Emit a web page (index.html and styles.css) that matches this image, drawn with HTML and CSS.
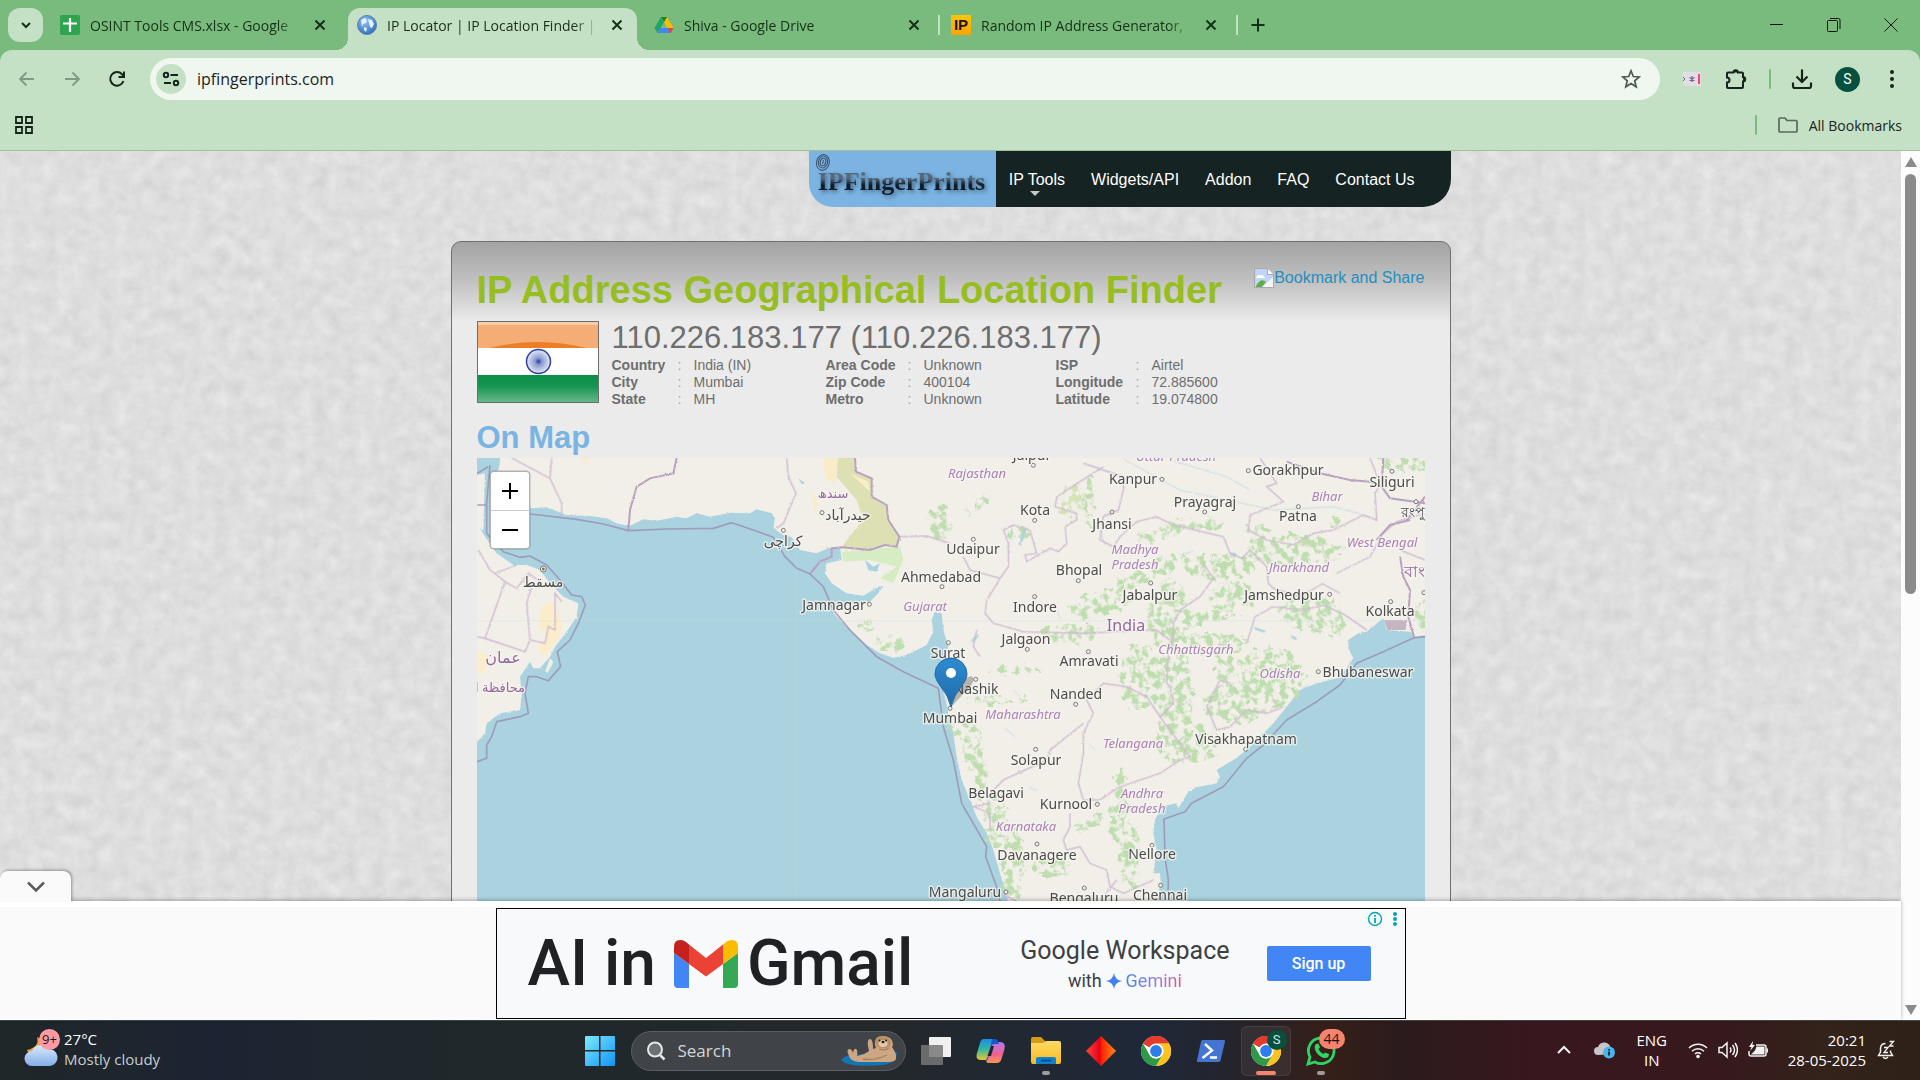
FILE: index.html
```html
<!DOCTYPE html>
<html lang="en">
<head>
<meta charset="utf-8">
<title>IP Locator | IP Location Finder | IPFingerPrints</title>
<link rel="stylesheet" href="styles.css">
</head>
<body>
<svg class="defs" width="0" height="0" aria-hidden="true">
  <defs>
    <symbol id="x" viewBox="0 0 16 16"><path d="M3.5 3.5l9 9M12.500 3.500l-9 9" stroke="#15301a" stroke-width="2" fill="none"/></symbol>
    <symbol id="chrome" viewBox="0 0 30 30">
      <circle cx="15" cy="15" r="15" fill="#fff"/>
      <path d="M15 15L2 7.500A15 15 0 0 1 28 7.500H15z" fill="#e33b2e"/>
      <path d="M15 0a15 15 0 0 1 13 7.500H15a7.500 7.500 0 0 0-6.500 3.750L2 7.500A15 15 0 0 1 15 0z" fill="#e33b2e"/>
      <path d="M28 7.500A15 15 0 0 1 15 30l6.500-11.250A7.500 7.500 0 0 0 15 7.500z" fill="#fcc31e"/>
      <path d="M2 7.500A15 15 0 0 0 15 30l6.500-11.250a7.500 7.500 0 0 1-13 0z" fill="#2e9a48"/>
      <circle cx="15" cy="15" r="7.500" fill="#fff"/><circle cx="15" cy="15" r="5.900" fill="#2f7de9"/>
    </symbol>
    <linearGradient id="win" x1="0" y1="0" x2="1" y2="1"><stop offset="0" stop-color="#7deafd"/><stop offset="1" stop-color="#1193f5"/></linearGradient>
    <linearGradient id="cop1" x1="0" y1="0" x2="0" y2="1"><stop offset="0" stop-color="#1b8ce8"/><stop offset=".5" stop-color="#35b8a0"/><stop offset="1" stop-color="#e9c62e"/></linearGradient>
    <linearGradient id="cop2" x1="0" y1="0" x2="0" y2="1"><stop offset="0" stop-color="#b678f0"/><stop offset=".6" stop-color="#f0628e"/><stop offset="1" stop-color="#fb9a4b"/></linearGradient>
    <linearGradient id="dia" x1="0" y1="0" x2="1" y2="0"><stop offset="0" stop-color="#ff4a3a"/><stop offset=".45" stop-color="#e6001c"/><stop offset=".55" stop-color="#ff2a00"/><stop offset="1" stop-color="#ff8a1c"/></linearGradient>
    <linearGradient id="fold" x1="0" y1="0" x2="0" y2="1"><stop offset="0" stop-color="#ffdb63"/><stop offset="1" stop-color="#f9b924"/></linearGradient>
    <linearGradient id="pin" x1="0" y1="0" x2="0" y2="1"><stop offset="0" stop-color="#2e8bd0"/><stop offset="1" stop-color="#1f69a8"/></linearGradient>
    <linearGradient id="cloud" x1="0" y1="0" x2="0" y2="1"><stop offset="0" stop-color="#d8eafc"/><stop offset="1" stop-color="#84aee8"/></linearGradient>
    <linearGradient id="saf" x1="0" y1="0" x2="0" y2="1"><stop offset="0" stop-color="#0a8f47"/><stop offset=".4" stop-color="#169650"/><stop offset="1" stop-color="#6ab98e"/></linearGradient>
    <radialGradient id="globe" cx=".4" cy=".3" r=".8"><stop offset="0" stop-color="#8fc6f5"/><stop offset="1" stop-color="#2464b8"/></radialGradient>
    <radialGradient id="chakra"><stop offset="0" stop-color="#2a3d9b"/><stop offset=".3" stop-color="#8c9bd0"/><stop offset="1" stop-color="#e6eaf6"/></radialGradient>
    <filter id="rough" x="-5%" y="-5%" width="110%" height="110%"><feTurbulence type="fractalNoise" baseFrequency=".12" numOctaves="3" seed="4"/><feDisplacementMap in="SourceGraphic" scale="7"/></filter>
    <filter id="patch" x="-5%" y="-5%" width="110%" height="110%"><feTurbulence type="fractalNoise" baseFrequency=".045" numOctaves="5" seed="9" result="n"/><feDisplacementMap in="SourceGraphic" in2="n" scale="45" xChannelSelector="R" yChannelSelector="G" result="d"/><feColorMatrix in="n" values="0 0 0 0 0  0 0 0 0 0  0 0 0 0 0  0 0 0 6 -2.600" result="m"/><feComposite in="d" in2="m" operator="in"/></filter>
    <filter id="paper" x="0" y="0" width="100%" height="100%" color-interpolation-filters="sRGB"><feTurbulence type="fractalNoise" baseFrequency=".07" numOctaves="5" seed="3"/><feColorMatrix values=".08 .05 0 0 .805  .08 .05 0 0 .805  .08 .05 0 0 .805  0 0 0 0 1"/></filter>
  </defs>
</svg>

<header class="browser">
  <div class="tabstrip">
    <button class="tab-search" aria-label="Search tabs"><svg width="16" height="16" viewBox="0 0 16 16"><path d="M4 6l4 4 4-4" fill="none" stroke="#12301a" stroke-width="2"/></svg></button>
    <div class="tab"><svg width="20" height="20" viewBox="0 0 20 20"><rect width="20" height="20" rx="2" fill="#2ea44f"/><path d="M10 3v14M3 8.500h14" stroke="#fff" stroke-width="2.200"/></svg><span class="tab-title">OSINT Tools CMS.xlsx - Google</span><button class="tab-close" aria-label="Close tab"><svg width="16" height="16"><use href="#x"/></svg></button></div>
    <div class="tab active"><svg width="20" height="20" viewBox="0 0 20 20"><circle cx="10" cy="10" r="9.500" fill="url(#globe)" stroke="#5a7fa8"/><path d="M4 5l4-2 2 2-1 3-3 1-1 3zM11 4l4 1 2 4-2 4-2-1-1-4zM7 12l3 1-1 4-2-2z" fill="#e8f2fb"/></svg><span class="tab-title">IP Locator | IP Location Finder |</span><button class="tab-close" aria-label="Close tab"><svg width="16" height="16"><use href="#x"/></svg></button></div>
    <div class="tab"><svg width="20" height="20" viewBox="0 0 20 20"><path d="M7 2h6l-6.500 11.500L3.500 18 .5 13z" fill="#1fa463"/><path d="M7 2h6l6.500 11h-6z" fill="#fbbc04"/><path d="M6.500 13h13l-3 5h-13z" fill="#4285f4"/><path d="M13.500 13h6l-3 5z" fill="#ea4335"/><path d="M7 2h6l-3 5z" fill="#188038"/><path d="M10 7.500L6.800 13h6.400z" fill="#79bb7c"/></svg><span class="tab-title">Shiva - Google Drive</span><button class="tab-close" aria-label="Close tab"><svg width="16" height="16"><use href="#x"/></svg></button></div>
    <div class="tab divided"><span class="ip-icon">IP</span><span class="tab-title">Random IP Address Generator,</span><button class="tab-close" aria-label="Close tab"><svg width="16" height="16"><use href="#x"/></svg></button></div>
    <button class="new-tab" aria-label="New tab"><svg width="16" height="16" viewBox="0 0 16 16"><path d="M8 1.500v13M1.500 8h13" stroke="#15301a" stroke-width="2"/></svg></button>
    <div class="window-buttons">
      <button aria-label="Minimize"><svg width="14" height="14" viewBox="0 0 14 14"><path d="M0 6.500h13" stroke="#111"/></svg></button>
      <button aria-label="Restore"><svg width="14" height="14" viewBox="0 0 14 14"><path d="M.5 3.500q0-1 1-1h8q1 0 1 1v9q0 1-1 1h-8q-1 0-1-1zM3 .5h8.500q1.500 0 1.500 1.500v9" fill="none" stroke="#111"/></svg></button>
      <button aria-label="Close"><svg width="14" height="14" viewBox="0 0 14 14"><path d="M.5.5l13 13M13.500.5l-13 13" stroke="#111"/></svg></button>
    </div>
  </div>
  <div class="chrome-body">
    <div class="toolbar">
      <button class="tool" aria-label="Back"><svg width="20" height="20" viewBox="0 0 20 20"><path d="M17 10H3M9.500 3.500L3 10l6.500 6.500" fill="none" stroke="#7f9a82" stroke-width="1.800"/></svg></button>
      <button class="tool" aria-label="Forward"><svg width="20" height="20" viewBox="0 0 20 20"><path d="M3 10h14M10.500 3.500L17 10l-6.500 6.500" fill="none" stroke="#7f9a82" stroke-width="1.800"/></svg></button>
      <button class="tool" aria-label="Reload"><svg width="20" height="20" viewBox="0 0 20 20"><path d="M16.500 12A6.800 6.800 0 1 1 15 5.200l1.700 1.800M17 2.500V8h-5.500" fill="none" stroke="#16251a" stroke-width="2"/></svg></button>
      <div class="omnibox">
        <button class="site-info" aria-label="Site information"><svg width="18" height="18" viewBox="0 0 18 18"><g fill="none" stroke="#16251a" stroke-width="2"><circle cx="4" cy="5" r="2.200"/><path d="M8.500 5H16M2 13h7"/><circle cx="14" cy="13" r="2.200"/></g></svg></button>
        <input type="text" aria-label="Address" value="ipfingerprints.com">
        <button class="star" aria-label="Bookmark this tab"><svg width="20" height="20" viewBox="0 0 20 20"><path d="M10 1.800l2.300 5.700 6 .4-4.600 3.900 1.500 6L10 14.500l-5.200 3.300 1.500-6L1.700 7.900l6-.4z" fill="none" stroke="#4c5a4e" stroke-width="1.700"/></svg></button>
      </div>
      <div class="tools-right">
        <button class="tool" aria-label="Password extension"><svg width="18" height="14" viewBox="0 0 18 14"><rect width="18" height="14" fill="#e3dde6"/><path d="M9 4v6M6.500 5.500l5 3M11.500 5.500l-5 3" stroke="#6c6a86" stroke-width="1.200" fill="none"/><path d="M0 5l2 2-2 2" stroke="#6c6a86" fill="none"/><path d="M16 2v10" stroke="#f04b6c" stroke-width="2"/></svg></button>
        <button class="tool" aria-label="Extensions"><svg width="22" height="22" viewBox="0 0 22 22"><path d="M3 4.500h5.500a2.200 2.200 0 0 1 4.400 0H17q1 0 1 1V9a2.200 2.200 0 0 1 0 4.400V19q0 1-1 1H3q-1 0-1-1v-4.500a2.500 2.500 0 0 0 0-5V5.500q0-1 1-1z" fill="none" stroke="#16251a" stroke-width="2"/><path d="M8.500 4.500a2.200 2.200 0 0 1 4.400 0zM18 9a2.200 2.200 0 0 1 0 4.400z" fill="#16251a"/></svg></button>
        <span class="divider"></span>
        <button class="tool" aria-label="Downloads"><svg width="22" height="22" viewBox="0 0 22 22"><path d="M11 1.500V14M5.500 8.500L11 14l5.500-5.500M2 14.500V18q0 2 2 2h14q2 0 2-2v-3.500" fill="none" stroke="#16251a" stroke-width="2.200"/></svg></button>
        <button class="avatar" aria-label="Profile">S</button>
        <button class="tool" aria-label="Menu"><svg width="20" height="20" viewBox="0 0 20 20"><circle cx="10" cy="3" r="2"/><circle cx="10" cy="10" r="2"/><circle cx="10" cy="17" r="2"/></svg></button>
      </div>
    </div>
    <div class="bookmarks">
      <button class="apps" aria-label="Apps"><svg width="18" height="18" viewBox="0 0 18 18"><path d="M1 1h6v6H1zM11 1h6v6h-6zM1 11h6v6H1zM11 11h6v6h-6z" fill="none" stroke="#16251a" stroke-width="1.800"/></svg></button>
      <span class="divider"></span>
      <button class="all-bookmarks"><svg width="20" height="16" viewBox="0 0 20 16"><path d="M1 2q0-1 1-1h5l2 2.500h9q1 0 1 1V14q0 1-1 1H2q-1 0-1-1z" fill="none" stroke="#59685b" stroke-width="1.700"/></svg>All Bookmarks</button>
    </div>
  </div>
</header>

<div class="viewport">
  <div class="window">
    <main class="page">
      <svg class="paper" aria-hidden="true"><rect width="100%" height="100%" filter="url(#paper)"/></svg>
      <div class="container">
        <nav class="site-nav">
          <a class="logo" href="#"><svg width="16" height="19" viewBox="0 0 16 19" aria-hidden="true"><g fill="none" stroke="#3d566c" stroke-width="1.100" transform="rotate(14 8 9)"><ellipse cx="8" cy="9.500" rx="6.300" ry="8"/><ellipse cx="8" cy="9" rx="4.500" ry="6"/><ellipse cx="8" cy="9" rx="2.700" ry="3.800"/><path d="M8 7v4"/></g></svg><span>IPFingerPrints</span></a>
          <ul>
            <li class="has-menu"><a href="#">IP Tools</a></li><li><a href="#">Widgets/API</a></li><li><a href="#">Addon</a></li><li><a href="#">FAQ</a></li><li><a href="#">Contact Us</a></li>
          </ul>
        </nav>
        <section class="card">
          <div class="card-head">
            <h1>IP Address Geographical Location Finder</h1>
            <a class="share" href="#"><svg width="20" height="20" viewBox="0 0 20 20" aria-hidden="true"><path d="M.5.500h13l6 6v13H.5z" fill="#c3d5f5" stroke="#a9a9a9"/><path d="M2 10q1-4 4-2.500 3-2 5 2.500z" fill="#fff"/><path d="M2 18q5-9 10-4l-4 5H2z" fill="#5aaf4a"/><path d="M8 19l11-10v10z" fill="#f5f5f5"/><path d="M13.500.500v6h6" fill="#fff" stroke="#a9a9a9"/></svg>Bookmark and Share</a>
          </div>
          <div class="summary">
            <svg class="flag" width="122" height="82" viewBox="0 0 122 82" role="img" aria-label="Flag of India"><path d="M0 0h122v27H0z" fill="#f4ad75"/><path d="M0 0h122v4H0z" fill="#f8cdaa"/><path d="M12 27q49-12 98 0z" fill="#ec7f26"/><path d="M0 27h122v27H0z" fill="#fff"/><path d="M0 54h122v28H0z" fill="url(#saf)"/><circle cx="61.500" cy="40.500" r="12" fill="url(#chakra)" stroke="#2c3f9d" stroke-width="1.500"/><rect x=".5" y=".5" width="121" height="81" fill="none" stroke="#6d6d6d"/></svg>
            <div class="details">
              <p class="ip">110.226.183.177 (110.226.183.177)</p>
              <table>
                <colgroup><col class="c66"><col class="c16"><col class="c132"><col class="c82"><col class="c16"><col class="c132"><col class="c80"><col class="c16"><col></colgroup>
                <tr><th scope="row">Country</th><td class="colon">:</td><td>India (IN)</td><th>Area Code</th><td class="colon">:</td><td>Unknown</td><th>ISP</th><td class="colon">:</td><td>Airtel</td></tr>
                <tr><th scope="row">City</th><td class="colon">:</td><td>Mumbai</td><th>Zip Code</th><td class="colon">:</td><td>400104</td><th>Longitude</th><td class="colon">:</td><td>72.885600</td></tr>
                <tr><th scope="row">State</th><td class="colon">:</td><td>MH</td><th>Metro</th><td class="colon">:</td><td>Unknown</td><th>Latitude</th><td class="colon">:</td><td>19.074800</td></tr>
              </table>
            </div>
          </div>
          <h2>On Map</h2>
          <div class="map">
            <svg class="tiles" viewBox="0 0 948 460" role="img" aria-label="Map of India">
              <rect width="948" height="460" fill="#aad3df"/>
              <g transform="translate(-7 -8) scale(.33333)">
                <g fill="#f2efe9" filter="url(#rough)">
                  <path d="M88 0Q95 60 75 70L130 150L185 175L230 172L290 195L360 198L410 205L440 220L478 228L520 208L560 212L620 200L650 205L680 190L720 200L780 188L840 190L860 178L905 190L915 205L910 235L940 255L965 262L990 300L1040 310L1075 295L1110 290L1115 330L1070 340L1065 370L1085 400L1130 430L1180 437L1225 410L1240 408L1225 430L1200 455L1100 470L1090 490L1130 530L1190 585L1230 610L1270 623L1310 615L1370 585L1390 545L1385 510L1395 485L1415 490L1420 540L1435 590L1425 640L1415 700L1425 740L1435 790L1450 850L1460 920L1475 990L1500 1050L1520 1100L1550 1150L1570 1200L1590 1270L1605 1320L1625 1400L2060 1400L2060 1353L2072 1300L2070 1270L2050 1270L2060 1200L2050 1150L2055 1110L2075 1070L2120 1060L2125 1075L2155 1025L2180 1012L2240 1000L2250 980L2240 960L2290 930L2330 900L2370 860L2410 820L2450 770L2490 720L2540 700L2600 685L2625 660L2650 625L2635 595L2635 570L2665 550L2690 545L2740 505L2750 540L2820 545L2835 560L2900 550L2900 0Z"/>
                  <path d="M0 215L25 225L45 260L80 310L130 345L170 345L210 360L240 400L280 440L325 460L320 500L290 545L255 590L240 620L210 655L190 655L180 635L150 680L155 730L150 780L90 790L50 820L45 850L21 875L0 880Z"/>
                  <path d="M0 80L45 70L40 240L0 230ZM225 665L240 625L250 635L235 665Z"/>
                </g>
                <g filter="url(#rough)">
                  <path d="M1105 0H1155L1158 65L1205 85L1205 140L1250 165L1255 210L1288 260L1280 290L1245 285L1200 300L1115 292L1150 245L1180 210L1160 150L1100 80Z" fill="#dde0b3"/>
                  <path d="M1060 20h42l-5 80l-30-10zM1020 110l25 50l-10 30zM1140 70l55 25l5 30z" fill="#f8ecc9"/>
                  <path d="M1115 305L1290 290L1300 330L1270 400L1230 385L1280 350L1200 330L1120 335Z" fill="#d6ecc2"/>
                  <path d="M1185 330l25 20l20-10l-10 25l-25-5zM985 85l20 15l-10 2z" fill="#aad3df"/>
                  <path d="M215 465L250 460L275 520L270 560L220 620L205 590L235 560L205 530ZM21 600l40 20l-20 50h-20zM330 24h30l-15 20z" fill="#fbeccb"/>
                </g>
                <g fill="#bfdeb0" filter="url(#patch)" transform="translate(1410 0)">
                  <ellipse cx="390" cy="150" rx="34" ry="52" fill="#d4e4b6"/><ellipse cx="445" cy="160" rx="18" ry="75"/><ellipse cx="660" cy="250" rx="70" ry="18" transform="rotate(-20 660 250)"/><ellipse cx="770" cy="222" rx="90" ry="15"/><ellipse cx="955" cy="250" rx="42" ry="22"/><ellipse cx="840" cy="350" rx="105" ry="40"/><ellipse cx="880" cy="440" rx="70" ry="48"/><ellipse cx="480" cy="465" rx="95" ry="34" transform="rotate(-12 480 465)"/><ellipse cx="620" cy="370" rx="130" ry="24" transform="rotate(-25 620 370)"/><ellipse cx="690" cy="500" rx="65" ry="110"/><ellipse cx="700" cy="740" rx="60" ry="150"/><ellipse cx="740" cy="880" rx="100" ry="65"/><ellipse cx="600" cy="680" rx="60" ry="100"/><ellipse cx="850" cy="640" rx="26" ry="85"/><ellipse cx="990" cy="680" rx="100" ry="90"/><ellipse cx="890" cy="760" rx="100" ry="60"/><ellipse cx="1110" cy="490" rx="95" ry="56"/><ellipse cx="1180" cy="525" rx="34" ry="40"/><ellipse cx="1060" cy="300" rx="150" ry="46"/><ellipse cx="390" cy="550" rx="90" ry="28"/><ellipse cx="60" cy="840" rx="34" ry="30"/><ellipse cx="95" cy="890" rx="22" ry="80"/><ellipse cx="120" cy="980" rx="17" ry="80"/><ellipse cx="165" cy="1110" rx="35" ry="75"/><ellipse cx="220" cy="1250" rx="36" ry="110"/><ellipse cx="540" cy="1080" rx="30" ry="120"/><ellipse cx="570" cy="1220" rx="30" ry="100"/><ellipse cx="460" cy="1110" rx="60" ry="16" transform="rotate(-35 460 1110)"/><ellipse cx="820" cy="575" rx="110" ry="28"/><ellipse cx="1400" cy="38" rx="90" ry="26"/><ellipse cx="1445" cy="500" rx="24" ry="50"/><ellipse cx="235" cy="250" rx="34" ry="18"/><ellipse cx="110" cy="170" rx="60" ry="10" transform="rotate(-50 110 170)"/><ellipse cx="-145" cy="585" rx="45" ry="24"/><ellipse cx="-225" cy="525" rx="26" ry="14"/><ellipse cx="0" cy="220" rx="30" ry="60"/><ellipse cx="1190" cy="215" rx="34" ry="18"/><ellipse cx="170" cy="750" rx="90" ry="12"/><ellipse cx="230" cy="660" rx="80" ry="10"/><ellipse cx="800" cy="500" rx="60" ry="20"/><ellipse cx="330" cy="1250" rx="60" ry="30"/>
                </g>
                <g fill="none" stroke="#a9d2e2" filter="url(#rough)" transform="translate(1410 0)">
                  <path d="M350 480l10 25M555 30L720 120L840 145L1000 180L1180 170L1290 200M480 240l15 45M720 315l40-12M195 835l30 25M220 720l20 20M270 1015l20 5M445 880l20 20M1085 715l20-10M1050 555l20 10M935 530l30 15M690 30L860 80L930 120" stroke-width="3" stroke-opacity=".6"/>
                  <path d="M255 235l-15 50M95 575l20-20M870 310l20 5M945 535l30 10M1055 560l15 8" stroke-width="7"/>
                </g>
                <g fill="none" stroke="#cdb9d0" stroke-width="4" filter="url(#rough)">
                  <path d="M125 24L240 85L245 24M240 85L275 160V205M950 24L955 80L978 130L940 220L915 238M1288 260L1370 258L1440 280M25 300L60 360L105 395L45 565L21 560M75 370L140 345M105 395L140 415L175 370L210 395M185 410L170 460L180 570L165 605L45 565M180 570L225 580L235 530L255 540V430L275 455"/>
                  <g transform="translate(1410 0)">
                    <path d="M490 50L350 140L345 170L410 190V210L375 230L380 280L355 305L330 295L260 335L255 315L290 310L270 240L220 225L190 240L205 280L205 350L180 385L90 360L70 320M430 40L550 80L550 120L535 180L490 200L480 270L520 290L540 260L590 215L650 200L700 225L850 260L870 310L905 325L930 300L980 350L985 400L1000 415M960 24L1010 100L980 110L1030 155L930 195L925 240L980 270L1060 285L1120 250L1180 240L1270 195L1310 210L1305 130L1335 80M790 340L820 385L780 440L720 480L700 520V560L685 600L680 700M180 385L165 410L140 450L135 490L160 520L250 545L430 550L520 545L650 540L690 570M110 540L100 590L120 620M920 580L945 500L1000 470L1090 480L1150 465L1215 495L1280 540M1000 415L1080 440L1150 400M1145 400L1200 430M660 800L750 920L720 930L660 970L600 990L530 1015L480 1050L430 1050L415 1000L430 910L430 850L460 790L440 750L490 700L560 710L620 740L660 800L700 760L690 710L680 700M870 700L840 690L800 770L830 840L870 830L920 780L980 790L1030 770M430 820L330 900L320 930L190 990L150 1030M150 1060L100 1070L150 1090L150 1140M390 1090L390 1130L370 1170L380 1200L420 1190L450 1240L500 1260L510 1310L550 1330L640 1290M530 1290L480 1353M1190 370L1290 320L1330 250L1370 215L1455 190M1380 300L1455 330M190 1335L230 1353M1290 24L1320 100"/>
                  </g>
                </g>
                <g fill="none" stroke="#b8a2c0" stroke-width="6" filter="url(#rough)">
                  <path d="M1155 24L1158 65L1205 85L1205 140L1250 165L1255 210L1288 260L1280 290L1245 285L1200 300L1115 292L1085 295V320L1050 335L1020 372M620 24L610 70L540 85L500 110L480 180L475 242"/>
                  <path d="M2450 35L2550 70L2640 90L2700 95L2735 110L2740 24M2735 110L2760 145L2865 160M2820 210L2760 225L2720 270M2790 320L2800 380L2820 420L2815 500L2832 560M2865 140L2810 210"/>
                </g>
                <path d="M2742 510h70l-5 30h-55z" fill="#c5b5c0" filter="url(#rough)"/>
                <path fill="none" stroke="#998fb3" stroke-opacity=".8" stroke-width="5" stroke-linejoin="round" d="M60 45L50 160V250L100 305L150 322L180 318L230 345L270 390L305 435L335 440L346 465L325 520L300 570L262 605L272 650L235 692L200 680L175 680L165 730L175 790L150 800L80 815L65 860L50 885L50 925L21 935M50 165H22M55 50L22 70M180 192L320 208L400 222L475 242L590 237L730 235L785 218L850 240L910 262L945 320L980 355L1020 372L1060 410L1090 480L1140 540L1220 620L1300 665L1405 715L1420 830L1450 930L1475 1060L1550 1190L1547 1220L1580 1310L1600 1400M2094 1400L2095 1290L2085 1220L2082 1107L2145 1085L2165 1060L2260 1010L2330 925L2380 885L2450 810L2540 755L2610 705L2660 640L2740 605L2832 563L2870 560"/>
                <path d="M21 512H2865M979 280V1400" stroke="#c5e0e6" stroke-opacity=".3" stroke-width="3"/>
                <g fill="#f2efe9" stroke="#777" stroke-width="3">
                  <circle cx="940" cy="241" r="6"/><circle cx="1056" cy="188" r="6"/><circle cx="1198" cy="463" r="6"/><circle cx="1416" cy="410" r="6"/><circle cx="220" cy="357" r="9"/><circle cx="220" cy="357" r="3" fill="#555"/>
                  <g transform="translate(1410 0)"><circle cx="280" cy="46" r="6"/><circle cx="666" cy="88" r="6"/><circle cx="925" cy="62" r="6"/><circle cx="1356" cy="64" r="6"/><circle cx="794" cy="186" r="6"/><circle cx="1075" cy="170" r="6"/><circle cx="1428" cy="155" r="6"/><circle cx="284" cy="211" r="6"/><circle cx="516" cy="186" r="6"/><circle cx="100" cy="268" r="6"/><circle cx="632" cy="399" r="6"/><circle cx="1169" cy="433" r="6"/><circle cx="415" cy="392" r="6"/><circle cx="284" cy="440" r="6"/><circle cx="1352" cy="455" r="6"/><circle cx="1452" cy="428" r="6"/><circle cx="25" cy="578" r="6"/><circle cx="262" cy="598" r="6"/><circle cx="445" cy="605" r="6"/><circle cx="1135" cy="665" r="6"/><circle cx="107" cy="688" r="6"/><circle cx="407" cy="763" r="6"/><circle cx="30" cy="775" r="6"/><circle cx="287" cy="898" r="6"/><circle cx="917" cy="898" r="6"/><circle cx="472" cy="1063" r="6"/><circle cx="291" cy="1182" r="6"/><circle cx="636" cy="1186" r="6"/><circle cx="433" cy="1314" r="6"/><circle cx="198" cy="1326" r="6"/><circle cx="662" cy="1306" r="6"/></g>
                </g>
              </g>
              <g class="city">
                <text x="555" y="2">Jaipur</text><text x="656" y="26">Kanpur</text><text x="811" y="17">Gorakhpur</text><text x="915" y="29">Siliguri</text><text x="728" y="49">Prayagraj</text><text x="821" y="63">Patna</text><text x="940" y="59">রংপুর</text><text x="558" y="57">Kota</text><text x="635" y="71">Jhansi</text><text x="496" y="96">Udaipur</text><text x="602" y="117">Bhopal</text><text x="464" y="124">Ahmedabad</text><text x="673" y="142">Jabalpur</text><text x="807" y="142">Jamshedpur</text><text x="558" y="154">Indore</text><text x="913" y="158">Kolkata</text><text x="357" y="152">Jamnagar</text><text x="549" y="186">Jalgaon</text><text x="612" y="208">Amravati</text><text x="471" y="200">Surat</text><text x="891" y="219">Bhubaneswar</text><text x="499" y="236">Nashik</text><text x="599" y="241">Nanded</text><text x="473" y="265">Mumbai</text><text x="769" y="286">Visakhapatnam</text><text x="559" y="307">Solapur</text><text x="519" y="340">Belagavi</text><text x="589" y="351">Kurnool</text><text x="560" y="402">Davanagere</text><text x="675" y="401">Nellore</text><text x="488" y="439">Mangaluru</text><text x="607" y="445">Bengaluru</text><text x="683" y="442">Chennai</text><text x="306" y="88">کراچی</text><text x="371" y="62">حیدرآباد</text><text x="66" y="129">مسقط</text>
              </g>
              <g class="state">
                <text x="699" y="3">Uttar Pradesh</text><text x="500" y="20">Rajasthan</text><text x="850" y="43">Bihar</text><text x="658" y="96">Madhya</text><text x="658" y="111">Pradesh</text><text x="905" y="89">West Bengal</text><text x="822" y="114">Jharkhand</text><text x="448" y="153">Gujarat</text><text x="719" y="196">Chhattisgarh</text><text x="803" y="220">Odisha</text><text x="546" y="261">Maharashtra</text><text x="656" y="290">Telangana</text><text x="665" y="340">Andhra</text><text x="665" y="355">Pradesh</text><text x="549" y="373">Karnataka</text>
              </g>
              <g class="country">
                <text x="649" y="173">India</text><text x="26" y="205">عمان</text><text x="946" y="119">বাংলা</text><text class="small" x="356" y="40">سندھ</text><text class="small" x="23" y="234">محافظة ا</text>
              </g>
              <path d="M475 248l16-17q9-10 3-13l-13 6z" fill="#000" opacity=".25"/>
              <path d="M474 249q-3-12-10-20-6-8-6-13a15.500 15.500 0 0 1 32 0q0 5-6 13-7 8-10 20z" fill="url(#pin)" stroke="#2068a8"/>
              <circle cx="474" cy="215" r="5" fill="#fff"/>
            </svg>
            <div class="zoom"><button aria-label="Zoom in"><svg width="16" height="16" viewBox="0 0 16 16"><path d="M8 0v16M0 8h16" stroke="#000" stroke-width="2"/></svg></button><button aria-label="Zoom out"><svg width="16" height="16" viewBox="0 0 16 16"><path d="M0 8h16" stroke="#000" stroke-width="2"/></svg></button></div>
          </div>
        </section>
      </div>
    </main>
    <aside class="ad-bar">
      <button class="ad-toggle" aria-label="Collapse ad"><svg width="20" height="12" viewBox="0 0 20 12"><path d="M2 1.500l8 8 8-8" fill="none" stroke="#5b5b5b" stroke-width="2.500"/></svg></button>
      <div class="ad">
        <p class="ad-title"><span>AI in</span><svg width="64" height="48" viewBox="0 0 64 48" aria-hidden="true"><path d="M0 13l15 11v24H4q-4 0-4-4z" fill="#4285f4"/><path d="M64 13L49 24v24h11q4 0 4-4z" fill="#34a853"/><path d="M0 13V7Q0 0 6 0q4 0 6 2l3 2.500V24z" fill="#c5221f"/><path d="M64 13V7q0-7-6-7-4 0-6 2l-3 2.500V24z" fill="#fbbc04"/><path d="M15 4.500L32 18 49 4.500V24L32 36.500 15 24z" fill="#ea4335"/></svg><span>Gmail</span></p>
        <div class="workspace"><p class="ws">Google Workspace</p><p class="gem">with <svg width="16" height="16" viewBox="0 0 16 16" aria-hidden="true"><path d="M8 0q1 7 8 8-7 1-8 8-1-7-8-8 7-1 8-8z" fill="#3f7ff0"/></svg> <span>Gemini</span></p></div>
        <button class="signup">Sign up</button>
        <svg class="ad-info" width="32" height="16" viewBox="0 0 32 16" aria-hidden="true"><circle cx="8" cy="8" r="6.500" fill="none" stroke="#00a5b8" stroke-width="1.400"/><path d="M8 7v5M8 4v1.700" stroke="#00a5b8" stroke-width="1.800"/><g fill="#00a5b8"><circle cx="28" cy="3" r="2"/><circle cx="28" cy="8" r="2"/><circle cx="28" cy="13" r="2"/></g></svg>
      </div>
    </aside>
  </div>
  <div class="scrollbar" aria-hidden="true"><i class="up"></i><span><i class="thumb"></i></span><i class="down"></i></div>
</div>

<footer class="taskbar">
  <div class="weather">
    <span class="weather-icon"><svg width="36" height="36" viewBox="0 0 36 36" aria-hidden="true"><path d="M13 3q3 10-10 13 3 8 11 4 6-5 4-11-2-5-5-6z" fill="#f2a33a"/><path d="M9 32a8 7.500 0 0 1-1-15 9 8.500 0 0 1 16-2 8.500 8.500 0 0 1 2 17z" fill="url(#cloud)"/></svg><b>9+</b></span>
    <p>27°C<br><span>Mostly cloudy</span></p>
  </div>
  <div class="apps-row">
    <button class="app" aria-label="Start"><svg width="30" height="30" viewBox="0 0 30 30"><path d="M0 1q0-1 1-1h13v14H0zM15.500 0H29q1 0 1 1v13H15.500zM0 15.500h14V30H1q-1 0-1-1zM15.500 15.500H30V29q0 1-1 1H15.500z" fill="url(#win)"/></svg></button>
    <label class="search"><svg width="20" height="20" viewBox="0 0 20 20"><circle cx="9" cy="8.500" r="7" fill="#6c7074" stroke="#e6e6e6" stroke-width="2"/><path d="M14 14l4.500 4.500" stroke="#e6e6e6" stroke-width="2.500"/></svg><input type="text" placeholder="Search" aria-label="Search">
      <svg width="56" height="32" viewBox="0 0 56 32" aria-hidden="true"><path d="M0 25q4-5 12-5l32-3q10-2 12 1-1 10-14 12-26 2-34-1-5-1-8-4z" fill="#1376b4"/><path d="M38 21l17-3q0 9-10 10z" fill="#2f5fd6"/><path d="M18 27q-9-1-10-6-3-6 0-7 3 0 4 4 1-5 3-4 2 1 1 7 7-1 12-5-3-12 1-12 3 0 3 10l3-1q-4-9 6-12 11 0 11 9l-1 2q5 7 4 12-1 3-7 3z" fill="#cda784"/><path d="M34 7q0-6 7-6t9 6q0 6-7 6.500-8 0-9-6.500z" fill="#b98f68"/><ellipse cx="42" cy="8.500" rx="4.500" ry="3.500" fill="#e2c8aa"/><circle cx="38.500" cy="5.500" r="1" fill="#222"/><circle cx="45" cy="5.500" r="1" fill="#222"/><ellipse cx="42" cy="7" rx="1.600" ry="1.200" fill="#2a211d"/><path d="M22 24q12 2 24-4M38 14q6 2 10-1" fill="none" stroke="#a57f5f" stroke-width="1.300"/></svg></label>
    <button class="app" aria-label="Task view"><svg width="30" height="28" viewBox="0 0 30 28"><rect x="8" width="22" height="20" rx="1" fill="#f0f0f0"/><rect y="8" width="22" height="20" rx="1" fill="#777" opacity=".85"/></svg></button>
    <button class="app" aria-label="Copilot"><svg width="30" height="26" viewBox="0 0 30 26"><path d="M8 1h9q3 0 2 4l-4 13q-1 4-5 4H5q-6 0-4-7L4 5q1-4 4-4z" fill="url(#cop1)"/><path d="M20 4h4q6 0 4.500 7l-3 10q-1 4-5 4h-8q-3 0-2-4l4-13q1-4 5.500-4z" fill="url(#cop2)"/><path d="M16 1h3q3 0 4 5h-4q-3 0-4 3l-3 12q-1 2-3 2 3-3 4-7z" fill="#1558c8"/><path d="M15 8l3 0-3 10h-3.500z" fill="#20242c"/></svg></button>
    <button class="app running" aria-label="File Explorer"><svg width="30" height="28" viewBox="0 0 30 28"><path d="M0 2q0-2 2-2h8l4 4v4H0z" fill="#d39a17"/><path d="M0 6h12l3-2h13q2 0 2 2v19q0 2-2 2H2q-2 0-2-2z" fill="url(#fold)"/><path d="M5 27v-5q0-2 2-2h16q2 0 2 2v5z" fill="#1180cf"/><path d="M10 23.500h10" stroke="#0a4f8c" stroke-width="2"/></svg></button>
    <button class="app" aria-label="Diamond app"><svg width="30" height="30" viewBox="0 0 30 30"><path d="M15 0l15 15-15 15L0 15z" fill="url(#dia)"/></svg></button>
    <button class="app" aria-label="Chrome"><svg width="30" height="30"><use href="#chrome"/></svg></button>
    <button class="app" aria-label="PowerShell"><svg width="30" height="24" viewBox="0 0 30 24"><path d="M6.500 1H28q1.500 0 1 1.500l-4.500 19Q24 23 22.500 23H2q-1.500 0-1-1.500l4-19Q5.300 1 6.500 1z" fill="#4475d0"/><path d="M9 5l7 6.500L6.500 19M14 18.500h7" fill="none" stroke="#fff" stroke-width="2.400"/></svg></button>
    <button class="app running current" aria-label="Chrome, work profile"><svg width="30" height="30"><use href="#chrome"/></svg><b class="profile">S</b></button>
    <button class="app running" aria-label="WhatsApp"><svg width="30" height="30" viewBox="0 0 30 30"><path d="M2 28l2-7a12.800 12.800 0 1 1 5 5z" fill="none" stroke="#2fd366" stroke-width="2.800"/><path d="M10 8l2.500-.5 1.500 4-1.500 1.500q1.500 3.500 5 5l1.500-1.500 4 1.500-.5 2.500q-2 2.500-6 1-6-3-7.500-8-1-4 1-5.500z" fill="#2fd366"/></svg><b class="count">44</b></button>
  </div>
  <div class="tray">
    <button aria-label="Hidden icons"><svg width="16" height="16" viewBox="0 0 16 16"><path d="M2 11l6-6 6 6" fill="none" stroke="#f2f2f2" stroke-width="2"/></svg></button>
    <button class="onedrive" aria-label="OneDrive"><svg width="22" height="18" viewBox="0 0 22 18"><path d="M4 14a4 4 0 0 1 0-8 6.500 6.500 0 0 1 12-1l2 8z" fill="#c9c4c6"/><circle cx="15" cy="11.500" r="6" fill="#49b4ee"/><path d="M15 10.500v4M15 8v1.500" stroke="#111" stroke-width="1.600"/></svg></button>
    <p class="lang">ENG<br>IN</p>
    <button class="status" aria-label="Network, sound, battery">
      <svg width="20" height="18" viewBox="0 0 20 18"><g fill="none" stroke="#f2f2f2" stroke-width="1.600"><path d="M1 7a12.700 12.700 0 0 1 18 0M4 10.200a8.500 8.500 0 0 1 12 0M7 13a4.300 4.300 0 0 1 6 0"/></g><circle cx="10" cy="15.500" r="1.800" fill="#f2f2f2"/></svg>
      <svg width="20" height="18" viewBox="0 0 20 18"><path d="M1 6.500h3l5-4.500v14l-5-4.500H1zM12 6.500q2 2.500 0 5M14.500 4q4 5 0 10M17 2q5 7 0 14" fill="none" stroke="#f2f2f2" stroke-width="1.500"/></svg>
      <svg width="20" height="18" viewBox="0 0 20 18"><path d="M8 4h8q2 0 2 2v7q0 2-2 2H3q-2 0-2-2v-3" fill="none" stroke="#f2f2f2" stroke-width="1.500"/><path d="M8.500 5.500H16.500v8H3l4-4zM18.500 7.500h1.500v4h-1.500z" fill="#f2f2f2"/><path d="M5 0L1 6h2.500L2 10l5-6H4.500z" fill="#f2f2f2"/></svg>
    </button>
    <p class="clock">20:21<br>28-05-2025</p>
    <button aria-label="Notifications"><svg width="18" height="20" viewBox="0 0 18 20"><path d="M8.500 3.500Q4 3.500 3.500 8v4L1.500 15.500h14l-2-3.500v-1.500" fill="none" stroke="#f2f2f2" stroke-width="1.500"/><path d="M6 17q2.500 3 5 0M7 7.500h4l-4 5h4M12.500 1.500h4l-4 4.500h4" fill="none" stroke="#f2f2f2" stroke-width="1.300"/></svg></button>
  </div>
</footer>
</body>
</html>
```
FILE: styles.css
```css
* { box-sizing: border-box; }
body {
  margin: 0;
  height: 100vh;
  display: flex;
  flex-direction: column;
  overflow: hidden;
  font-family: "Open Sans", "Noto Sans", sans-serif;
}
p, h1, h2, ul { margin: 0; padding: 0; }
button { border: 0; padding: 0; margin: 0; background: none; font: inherit; color: inherit; display: inline-flex; align-items: center; justify-content: center; }
svg { flex: none; display: block; }
.defs { position: absolute; }

/* Browser frame */
.browser { background: #79bb7c; flex: none; font-size: 14px; color: #163019; }
.tabstrip { display: flex; align-items: flex-end; gap: 8px; height: 50px; padding: 0 22px 0 8px; }
.tab-search { width: 35px; height: 34px; margin-bottom: 8px; border-radius: 12px; background: #c5e1c5; }
.tab { position: relative; flex: 0 1 289px; min-width: 0; height: 42px; display: flex; align-items: center; gap: 10px; padding: 0 12px 8px 9px; }
.tab-title { flex: 1; min-width: 0; overflow: hidden; white-space: nowrap; padding-top: 1px; line-height: 21px; mask-image: linear-gradient(to right, #000 88%, transparent); }
.tab.active { background: #c5e1c5; border-radius: 12px 12px 0 0; }
.tab.active::before, .tab.active::after { content: ""; position: absolute; bottom: 0; width: 12px; height: 12px; }
.tab.active::before { right: 100%; background: radial-gradient(circle at 0 0, transparent 12px, #c5e1c5 12px); }
.tab.active::after { left: 100%; background: radial-gradient(circle at 100% 0, transparent 12px, #c5e1c5 12px); }
.tab.divided::before, .tab.divided::after { content: ""; position: absolute; top: 7px; width: 2px; height: 20px; background: #c5e1c5; }
.tab.divided::before { left: -4px; }
.tab.divided::after { right: -7px; }
.ip-icon { width: 20px; height: 20px; background: linear-gradient(#fcc60a, #fba306); color: #1c1503; font: bold 15px/20px "Liberation Sans", sans-serif; text-align: center; }
.new-tab { width: 22px; height: 34px; margin: 0 0 8px 8px; }
.window-buttons { margin-left: auto; display: flex; gap: 43px; align-self: center; }

.chrome-body { background: #c5e1c5; border-radius: 12px 12px 0 0; padding-top: 8px; border-bottom: 1px solid #9fbf9f; }
.toolbar { display: flex; align-items: center; padding: 0 18px 0 17px; gap: 25px; height: 42px; }
.omnibox { flex: 1; display: flex; align-items: center; gap: 11px; height: 42px; margin-left: -2px; padding: 0 19px 0 6px; border-radius: 21px; background: #f0f7f0; }
.site-info { width: 30px; height: 30px; border-radius: 50%; background: #c5e1c5; }
.omnibox input { flex: 1; min-width: 0; border: 0; background: none; padding: 0; font: 16px "Open Sans", "Noto Sans", sans-serif; color: #1c241d; }
.tools-right { display: flex; align-items: center; gap: 22px; }
.tools-right .tool:first-child { margin: 0 2px 0 -2px; }
.divider { width: 2px; height: 20px; border-radius: 1px; background: #79bb7c; }
.avatar { width: 25px; height: 25px; border-radius: 50%; background: #05503f; color: #fff; font: 14px Roboto, sans-serif; }
.toolbar .divider { margin: 0 -2px 0 0; }
.tools-right svg { fill: #16251a; }
.bookmarks { display: flex; align-items: center; height: 50px; padding: 0 18px 0 15px; gap: 21px; }
.bookmarks .divider { margin-left: auto; }
.all-bookmarks { gap: 11px; color: #1c241d; }

/* Web page area */
.viewport { flex: 1; min-height: 0; display: flex; }
.window { flex: 1; min-width: 0; display: flex; flex-direction: column; }
.page { flex: 1; min-height: 0; position: relative; overflow: hidden; background: #dcdcdc; font-family: "Liberation Sans", Arial, sans-serif; }
.paper { position: absolute; inset: 0; width: 100%; height: 100%; }
.container { position: relative; max-width: 1000px; margin: 0 auto; }

.site-nav { display: flex; width: fit-content; margin: 0 0 34px auto; height: 56px; }
.logo { position: relative; width: 187px; padding: 16px 0 0 9px; background: #7bb4e2; border-radius: 0 0 0 24px; }
.logo svg { position: absolute; left: 6px; top: 2px; }
.logo span { background: linear-gradient(#55677a 40%, #101d2a 62%); background-clip: text; color: transparent; filter: drop-shadow(2px 2px 2px rgba(20, 40, 60, .55)); }
.site-nav ul { display: flex; gap: 26px; padding: 0 36px 0 13px; background: #152322; border-radius: 0 0 28px 0; list-style: none; }
.site-nav li { position: relative; }
.site-nav a { color: #fff; font-size: 16px; line-height: 57px; text-decoration: none; white-space: nowrap; }
.site-nav .logo { font: bold 26px/30px "Liberation Serif", serif; }
.has-menu::after { content: ""; position: absolute; left: 50%; top: 40px; margin-left: -7px; border: 5px solid transparent; border-top-color: #c5c8c8; border-bottom: 0; }

.card { border: 1px solid #707070; border-radius: 10px 10px 0 0; padding: 26px 25px 40px; background: linear-gradient(#a3a3a3, #c2c2c2 40px, #ebebeb 80px); color: #6e6e6e; }
.card-head { display: flex; justify-content: space-between; align-items: flex-start; margin-bottom: 8px; }
h1 { font-size: 38px; line-height: 44px; color: #96be20; white-space: nowrap; }
.share { display: flex; font-size: 16px; line-height: 20px; color: #238fbf; text-decoration: none; white-space: nowrap; }
.summary { display: flex; gap: 13px; margin-bottom: 12px; }
.flag { margin-top: 1px; }
.details { flex: 1; }
.ip { font-size: 31px; line-height: 36px; margin-bottom: 1px; }
table { border-collapse: collapse; table-layout: fixed; width: 100%; font-size: 14px; line-height: 17px; }
th, td { padding: 0; text-align: left; white-space: nowrap; }
.colon { color: #a5a5a5; }
.c16 { width: 16px; }
.c66 { width: 66px; }
.c80 { width: 80px; }
.c82 { width: 82px; }
.c132 { width: 132px; }
h2 { font-size: 31px; line-height: 36px; margin-bottom: 2px; color: #79b4e2; }

.map { position: relative; overflow: hidden; }
.tiles { width: 100%; height: auto; }
.tiles text { text-anchor: middle; paint-order: stroke; stroke: #f6f4ef; stroke-width: 3px; stroke-opacity: .75; stroke-linejoin: round; font-family: "Noto Sans", "DejaVu Sans", sans-serif; }
.city text { font-size: 14px; fill: #4c4c4c; }
.state text { font-size: 13px; font-style: italic; fill: #ab80b4; }
.country text { font-size: 16px; fill: #94689c; }
.country .small { font-size: 13px; }
.zoom { position: absolute; left: 13px; top: 13px; width: 40px; border: 1px solid rgba(0, 0, 0, .3); border-radius: 4px; background: #fff; box-shadow: 0 0 0 1px rgba(0, 0, 0, .12); }
.zoom button { width: 38px; height: 38px; }
.zoom button + button { border-top: 1px solid #ccc; }

/* Anchored advert */
.ad-bar { position: relative; flex: none; height: 119px; background: #fafafa; border-top: 6px solid #fff; box-shadow: 0 -1px 4px rgba(0, 0, 0, .3); padding: 1px 20px; }
.ad-toggle { position: absolute; left: 0; bottom: 118px; width: 71px; height: 31px; background: #fafafa; border-radius: 8px 8px 0 0; box-shadow: 1px -1px 3px rgba(0, 0, 0, .35); clip-path: inset(-5px -5px 0 0); }
.ad { position: relative; display: flex; align-items: center; max-width: 910px; height: 111px; margin: 0 auto; padding: 0 34px 0 31px; border: 1px solid #000; background: #f8f9fa; font-family: Roboto, sans-serif; }
.ad-title { display: flex; align-items: center; gap: 9px; font-size: 64px; line-height: 72px; font-weight: 500; color: #202124; white-space: nowrap; }
.ad-title span:first-child { margin-right: 9px; }
.workspace { margin-left: auto; padding-top: 5px; text-align: center; color: #3c4043; }
.ws { font-size: 25px; line-height: 30px; white-space: nowrap; }
.gem { display: flex; justify-content: center; align-items: center; gap: 4px; font-size: 18px; line-height: 30px; }
.gem span { background: linear-gradient(90deg, #4285f4, #a07be0 60%, #e05a80); background-clip: text; color: transparent; }
.signup { width: 104px; height: 35px; margin-left: 37px; border-radius: 2px; background: #4285f4; color: #fff; font-size: 16px; font-weight: 500; }
.ad-info { position: absolute; right: 6px; top: 2px; }

.scrollbar { width: 19px; display: flex; flex-direction: column; align-items: center; gap: 7px; padding: 6px 0 5px; background: #fcfcfc; }
.scrollbar span { flex: 1; }
.up, .down { border: 6px solid transparent; }
.up { border-top: 0; border-bottom: 10px solid #8b8b8b; }
.down { border-bottom: 0; border-top: 10px solid #8b8b8b; }
.thumb { display: block; width: 11px; height: 51%; border-radius: 6px; background: #8b8b8b; }

/* Taskbar */
.taskbar { flex: none; height: 60px; display: grid; grid-template-columns: 1fr auto 1fr; align-items: center; border-top: 1px solid #454a4c; color: #fff; font-size: 15px; line-height: 20px; background: linear-gradient(90deg, #202728, #1c2433 11%, #20282b 25%, #23282b 46%, #1f2839 60%, #24242c 64%, #351f19 69%, #2c1b1c 73%, #38171e 80%, #36191d 90%, #33231a 95%, #2f2118); }
.weather { display: flex; align-items: center; padding: 0 0 4px 24px; }
.weather-icon { position: relative; width: 40px; height: 40px; padding-top: 5px; }
.weather-icon b { position: absolute; right: 4px; top: 0; width: 21px; height: 21px; border-radius: 50%; background: #ff99a4; color: #161616; font-weight: 400; font-size: 13px; text-align: center; }
.weather p span { color: #c8cccf; }
.apps-row { display: flex; align-items: center; gap: 5px; }
.app { position: relative; width: 50px; height: 50px; }
.search { display: flex; align-items: center; width: 275px; height: 40px; margin-left: 1px; padding: 0 1px 0 14px; gap: 12px; border: 1px solid #5a5e62; border-radius: 20px; background: #404448; }
.search input { flex: 1; width: 0; border: 0; background: none; padding: 0; font: 17px "Open Sans", sans-serif; color: #fff; }
.search input::placeholder { color: #d3d5d6; }
.search svg:last-child { margin-right: 7px; }
.running::after { content: ""; position: absolute; bottom: 1px; left: 21px; width: 8px; height: 4px; border-radius: 2px; background: #a09a9c; }
.current { border: 1px solid rgba(255, 255, 255, .08); border-radius: 6px; background: rgba(255, 255, 255, .06); }
.current::after { left: 14px; bottom: 0; width: 20px; background: #f5836e; }
.profile, .count { position: absolute; font-weight: 400; border-radius: 10px; height: 20px; }
.profile { right: 3px; top: 3px; width: 20px; background: #05503f; color: #d8e5e0; font-family: Roboto, sans-serif; font-size: 13px; }
.count { left: 23px; top: 3px; width: 26px; background: #f5836e; color: #1a1312; font-size: 14px; }
.tray { display: flex; justify-content: flex-end; align-items: center; padding: 0 25px 2px 0; }
.onedrive { margin-left: 22px; }
.lang { width: 72px; text-align: center; }
.status { gap: 10px; }
.clock { text-align: right; margin: 0 11px 0 20px; }
```
